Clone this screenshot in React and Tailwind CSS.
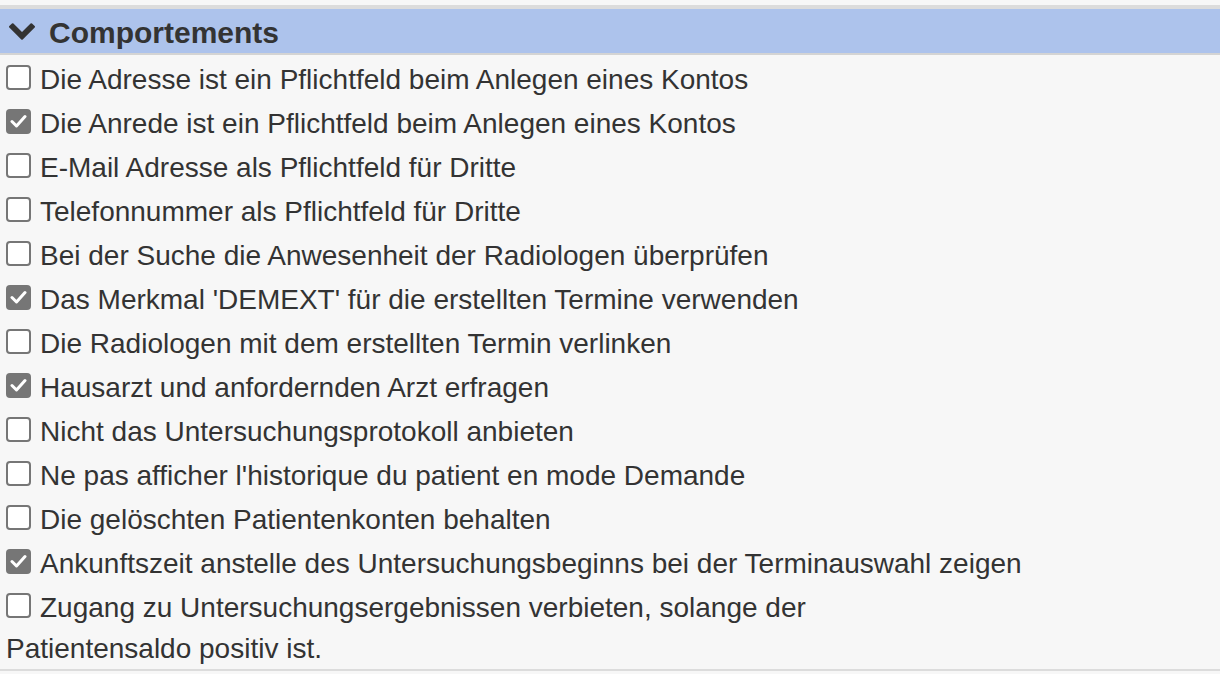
import React from "react";

const items = [
  ["Die Adresse ist ein Pflichtfeld beim Anlegen eines Kontos", false],
  ["Die Anrede ist ein Pflichtfeld beim Anlegen eines Kontos", true],
  ["E-Mail Adresse als Pflichtfeld für Dritte", false],
  ["Telefonnummer als Pflichtfeld für Dritte", false],
  ["Bei der Suche die Anwesenheit der Radiologen überprüfen", false],
  ["Das Merkmal 'DEMEXT' für die erstellten Termine verwenden", true],
  ["Die Radiologen mit dem erstellten Termin verlinken", false],
  ["Hausarzt und anfordernden Arzt erfragen", true],
  ["Nicht das Untersuchungsprotokoll anbieten", false],
  ["Ne pas afficher l'historique du patient en mode Demande", false],
  ["Die gelöschten Patientenkonten behalten", false],
  ["Ankunftszeit anstelle des Untersuchungsbeginns bei der Terminauswahl zeigen", true],
];

function Box({ checked }) {
  return checked ? (
    <span className="inline-flex h-[25px] w-[25px] shrink-0 items-center justify-center rounded-[4px] bg-[#767676]">
      <svg width="17" height="14" viewBox="0 0 17 14">
        <polyline points="2,7.5 6.5,12 15,2.5" fill="none" stroke="#fff" strokeWidth="3" strokeLinecap="round" strokeLinejoin="round" />
      </svg>
    </span>
  ) : (
    <span className="inline-block h-[25px] w-[25px] shrink-0 rounded-[4px] border-2 border-[#767676] bg-white" />
  );
}

export default function App() {
  return (
    <div className="h-[674px] w-full bg-[#f7f7f7] pt-[5px] text-[#333] font-['Liberation_Sans',Arial,sans-serif]">
      <div className="h-[4px] bg-[#dcdcdc]" />
      <div className="flex h-[44px] items-center gap-[14px] bg-[#adc3ec] pl-[9px]">
        <svg width="26" height="17" viewBox="90 533 1612 1035">
          <path
            fill="#333"
            d="M1683 808l-742 741q-19 19-45 19t-45-19l-742-741q-19-19-19-45.5t19-45.5l166-165q19-19 45-19t45 19l531 531 531-531q19-19 45-19t45 19l166 165q19 19 19 45.5t-19 45.5z"
          />
        </svg>
        <span className="mt-[2px] text-[30px] font-bold">Comportements</span>
      </div>
      <div className="h-[2px] bg-[#d4d4d4]" />
      <div className="text-[28px]">
        {items.map(([label, checked]) => (
          <div key={label} className="flex h-[44px] items-center gap-[9px] pl-[6px]">
            <Box checked={checked} />
            <span className="mt-[5px]">{label}</span>
          </div>
        ))}
        <div className="flex h-[44px] items-center gap-[9px] pl-[6px]">
          <Box checked={false} />
          <span className="mt-[5px]">Zugang zu Untersuchungsergebnissen verbieten, solange der</span>
        </div>
        <div className="flex h-[42px] items-center pl-[6px]">
          <span className="mt-[2px]">Patientensaldo positiv ist.</span>
        </div>
      </div>
      <div className="h-[2px] bg-[#dcdcdc]" />
    </div>
  );
}
